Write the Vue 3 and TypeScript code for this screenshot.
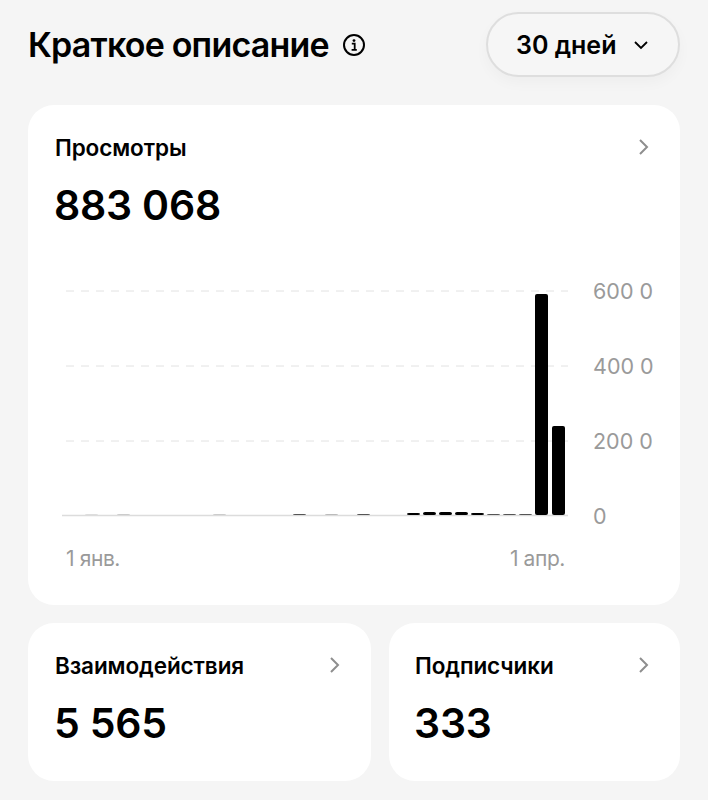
<script setup lang="ts">
interface Bar {
  x: number
  h: number
  color: string
}

// x and height of every bar in the chart, in svg units
const bars: Bar[] = [
  { x: 85, h: 1, color: '#ddd' },
  { x: 117, h: 1, color: '#ccc' },
  { x: 213, h: 1, color: '#ccc' },
  { x: 293, h: 1, color: '#555' },
  { x: 325, h: 1, color: '#bbb' },
  { x: 357, h: 1, color: '#555' },
  { x: 407, h: 2, color: '#000' },
  { x: 423, h: 3, color: '#000' },
  { x: 439, h: 3, color: '#000' },
  { x: 455, h: 3, color: '#000' },
  { x: 471, h: 2, color: '#000' },
  { x: 487, h: 1, color: '#555' },
  { x: 503, h: 1, color: '#555' },
  { x: 519, h: 1, color: '#555' },
  { x: 535, h: 221, color: '#000' },
  { x: 552, h: 89, color: '#000' }
]

const gridLines = [291, 366, 441]
const yLabels = ['600 0', '400 0', '200 0', '0']
</script>

<template>
  <div class="page">
    <header class="top">
      <h1 class="title">Краткое описание</h1>
      <svg class="info" width="24" height="24" viewBox="0 0 24 24" fill="none">
        <circle cx="12" cy="12" r="10" stroke="#000" stroke-width="2" />
        <circle cx="12" cy="7.6" r="1.4" fill="#000" />
        <path d="M9.8 10.6h2.9v6M9.6 16.8h5.2" stroke="#000" stroke-width="1.8" />
      </svg>
      <button class="range">
        <span>30 дней</span>
        <svg width="16" height="10" viewBox="0 0 16 10" fill="none">
          <path d="M2 2l6 6 6-6" stroke="#000" stroke-width="1.8" />
        </svg>
      </button>
    </header>

    <section class="card main">
      <div class="card-head">
        <span class="label">Просмотры</span>
        <svg class="arrow" width="12" height="18" viewBox="0 0 12 18" fill="none">
          <path d="M2 2l7 7-7 7" stroke="#8e8e8e" stroke-width="2" />
        </svg>
      </div>
      <div class="value">883 068</div>

      <div class="chart">
        <svg class="plot" width="540" height="250" viewBox="28 270 540 250">
          <line
            v-for="y in gridLines"
            :key="y"
            x1="66"
            x2="568"
            :y1="y"
            :y2="y"
            stroke="#e2e2e2"
            stroke-width="1"
            stroke-dasharray="8 7"
          />
          <line x1="62" x2="568" y1="515.5" y2="515.5" stroke="#dcdcdc" stroke-width="1.5" />
          <rect
            v-for="b in bars"
            :key="b.x"
            :x="b.x"
            :y="515 - b.h"
            width="13"
            :height="b.h"
            rx="2"
            :fill="b.color"
          />
        </svg>
        <div class="y-axis">
          <span v-for="l in yLabels" :key="l">{{ l }}</span>
        </div>
      </div>

      <div class="x-axis">
        <span>1 янв.</span>
        <span>1 апр.</span>
      </div>
    </section>

    <div class="row">
      <section class="card small">
        <div class="card-head">
          <span class="label">Взаимодействия</span>
          <svg class="arrow" width="12" height="18" viewBox="0 0 12 18" fill="none">
            <path d="M2 2l7 7-7 7" stroke="#8e8e8e" stroke-width="2" />
          </svg>
        </div>
        <div class="value">5 565</div>
      </section>
      <section class="card small">
        <div class="card-head">
          <span class="label">Подписчики</span>
          <svg class="arrow" width="12" height="18" viewBox="0 0 12 18" fill="none">
            <path d="M2 2l7 7-7 7" stroke="#8e8e8e" stroke-width="2" />
          </svg>
        </div>
        <div class="value">333</div>
      </section>
    </div>
  </div>
</template>

<style>
body {
  background: #f5f5f5;
}
</style>

<style scoped>
.page {
  width: 708px;
  height: 800px;
  box-sizing: border-box;
  padding: 12px 28px 0;
  background: #f5f5f5;
  font-family: Inter, "Liberation Sans", sans-serif;
  color: #000;
  overflow: hidden;
}

.top {
  display: flex;
  align-items: center;
  height: 65px;
  margin-bottom: 28px;
}

.title {
  margin: 0;
  font-size: 34px;
  font-weight: 600;
  letter-spacing: -0.8px;
}

.info {
  margin-left: 13px;
}

.range {
  display: flex;
  align-items: center;
  gap: 17px;
  margin-left: auto;
  height: 65px;
  width: 194px;
  box-sizing: border-box;
  padding: 0 0 0 28px;
  border: 2px solid #dedede;
  border-radius: 33px;
  background: #f6f6f6;
  box-shadow: 0 6px 14px rgba(0, 0, 0, 0.03);
  font-family: inherit;
  font-size: 25px;
  font-weight: 600;
  color: #000;
}

.card {
  background: #fff;
  border-radius: 26px;
  box-sizing: border-box;
}

.main {
  height: 500px;
  padding: 29px 28px 0;
}

.card-head {
  display: flex;
  align-items: center;
  justify-content: space-between;
  padding-right: 2px;
  height: 26px;
}

.label {
  margin-left: -1px;
  font-size: 22.5px;
  font-weight: 600;
  letter-spacing: -0.1px;
}

.value {
  margin-top: 21px;
  margin-left: -2px;
  font-size: 41px;
  font-weight: 600;
  letter-spacing: -0.2px;
  line-height: 48px;
}

.chart {
  display: flex;
  margin: 41px 0 0 -28px;
  height: 250px;
}

.plot {
  flex: none;
}

.y-axis {
  display: flex;
  flex-direction: column;
  justify-content: space-between;
  margin: 9px 0 0 25px;
  height: 249px;
  font-size: 21.5px;
  line-height: 24px;
  white-space: nowrap;
  color: #9a9a9a;
}

.x-axis {
  display: flex;
  justify-content: space-between;
  width: 499px;
  margin: 26px 0 0 10px;
  font-size: 21px;
  letter-spacing: -0.4px;
  color: #9a9a9a;
}

.row {
  display: flex;
  gap: 18px;
  margin-top: 18px;
}

.small {
  height: 158px;
  padding: 29px 28px 0;
  width: 291px;
}

.small:first-child {
  width: 343px;
}

.small + .small {
  padding-left: 27px;
}

.small .value {
  margin-top: 21px;
}
</style>
